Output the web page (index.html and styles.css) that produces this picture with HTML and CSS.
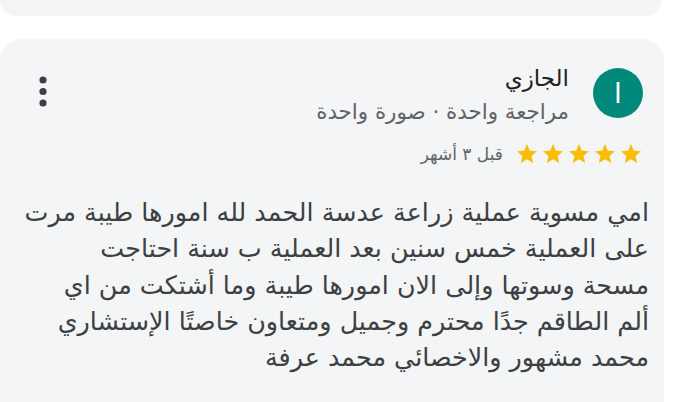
FILE: index.html
```html
<!DOCTYPE html>
<html lang="ar" dir="rtl">
<head>
<meta charset="utf-8">
<link rel="stylesheet" href="styles.css">
</head>
<body>
<div class="prev-card"></div>
<div class="card">
  <div class="header">
    <div class="avatar">ا</div>
    <div class="meta">
      <div class="name">الجازي</div>
      <div class="sub">مراجعة واحدة · صورة واحدة</div>
    </div>
    <button class="menu" aria-label="المزيد">
      <svg width="8" height="31" viewBox="0 0 8 31"><circle cx="4" cy="4" r="3.6"/><circle cx="4" cy="15.5" r="3.6"/><circle cx="4" cy="27" r="3.6"/></svg>
    </button>
  </div>
  <div class="rating">
    <div class="stars">
      <svg viewBox="0 0 24 24" class="star"><path d="M12 17.27L18.18 21l-1.64-7.03L22 9.24l-7.19-.61L12 2 9.19 8.63 2 9.24l5.46 4.73L5.82 21z"/></svg>
      <svg viewBox="0 0 24 24" class="star"><path d="M12 17.27L18.18 21l-1.64-7.03L22 9.24l-7.19-.61L12 2 9.19 8.63 2 9.24l5.46 4.73L5.82 21z"/></svg>
      <svg viewBox="0 0 24 24" class="star"><path d="M12 17.27L18.18 21l-1.64-7.03L22 9.24l-7.19-.61L12 2 9.19 8.63 2 9.24l5.46 4.73L5.82 21z"/></svg>
      <svg viewBox="0 0 24 24" class="star"><path d="M12 17.27L18.18 21l-1.64-7.03L22 9.24l-7.19-.61L12 2 9.19 8.63 2 9.24l5.46 4.73L5.82 21z"/></svg>
      <svg viewBox="0 0 24 24" class="star"><path d="M12 17.27L18.18 21l-1.64-7.03L22 9.24l-7.19-.61L12 2 9.19 8.63 2 9.24l5.46 4.73L5.82 21z"/></svg>
    </div>
    <span class="date">قبل ٣ أشهر</span>
  </div>
  <p class="text">امي مسوية عملية زراعة عدسة الحمد لله امورها طيبة مرت<br>على العملية خمس سنين بعد العملية ب سنة احتاجت<br>مسحة وسوتها وإلى الان امورها طيبة وما أشتكت من اي<br>ألم الطاقم جدًا محترم وجميل ومتعاون خاصتًا الإستشاري<br>محمد مشهور والاخصائي محمد عرفة</p>
</div>
</body>
</html>
```
FILE: styles.css
```css
html, body {
  margin: 0;
  padding: 0;
  background: #ffffff;
}
body {
  font-family: "DejaVu Sans", sans-serif;
  color: #3c4043;
  overflow: hidden;
  height: 402px;
}
.prev-card {
  height: 16px;
  margin-left: 0;
  margin-right: 12px;
  background: #f4f5f6;
  border-radius: 0 0 22px 22px;
}
.card {
  margin-top: 23px;
  margin-right: 10px;
  margin-left: 0;
  background: #f4f5f6;
  border-radius: 22px;
  padding: 25px 15px 30px 16px;
  min-height: 400px;
}
.header {
  display: flex;
  align-items: flex-start;
  gap: 24px;
  margin-right: 6px;
}
.avatar {
  width: 50px;
  height: 50px;
  margin-top: 4px;
  border-radius: 50%;
  background: #00897b;
  color: #ffffff;
  font-size: 28px;
  display: flex;
  align-items: center;
  justify-content: center;
  flex: none;
}
.meta {
  display: flex;
  flex-direction: column;
  gap: 8px;
}
.name {
  font-size: 23px;
  line-height: 28px;
  color: #202124;
}
.sub {
  font-size: 21.4px;
  line-height: 24px;
  color: #5f6368;
}
.menu {
  margin-right: auto;
  margin-top: 12px;
  border: 0;
  background: transparent;
  padding: 0 0 0 23px;
  fill: #3c4043;
}
.rating {
  display: flex;
  align-items: center;
  gap: 12px;
  margin-top: 18px;
  margin-right: 6px;
}
.stars {
  display: flex;
  gap: 2px;
}
.star {
  width: 24px;
  height: 24px;
  fill: #fbbc04;
}
.date {
  font-size: 17px;
  color: #5f6368;
}
.text {
  margin: 28px 0 0;
  font-size: 25.4px;
  line-height: 36.3px;
  color: #3c4043;
}
```
